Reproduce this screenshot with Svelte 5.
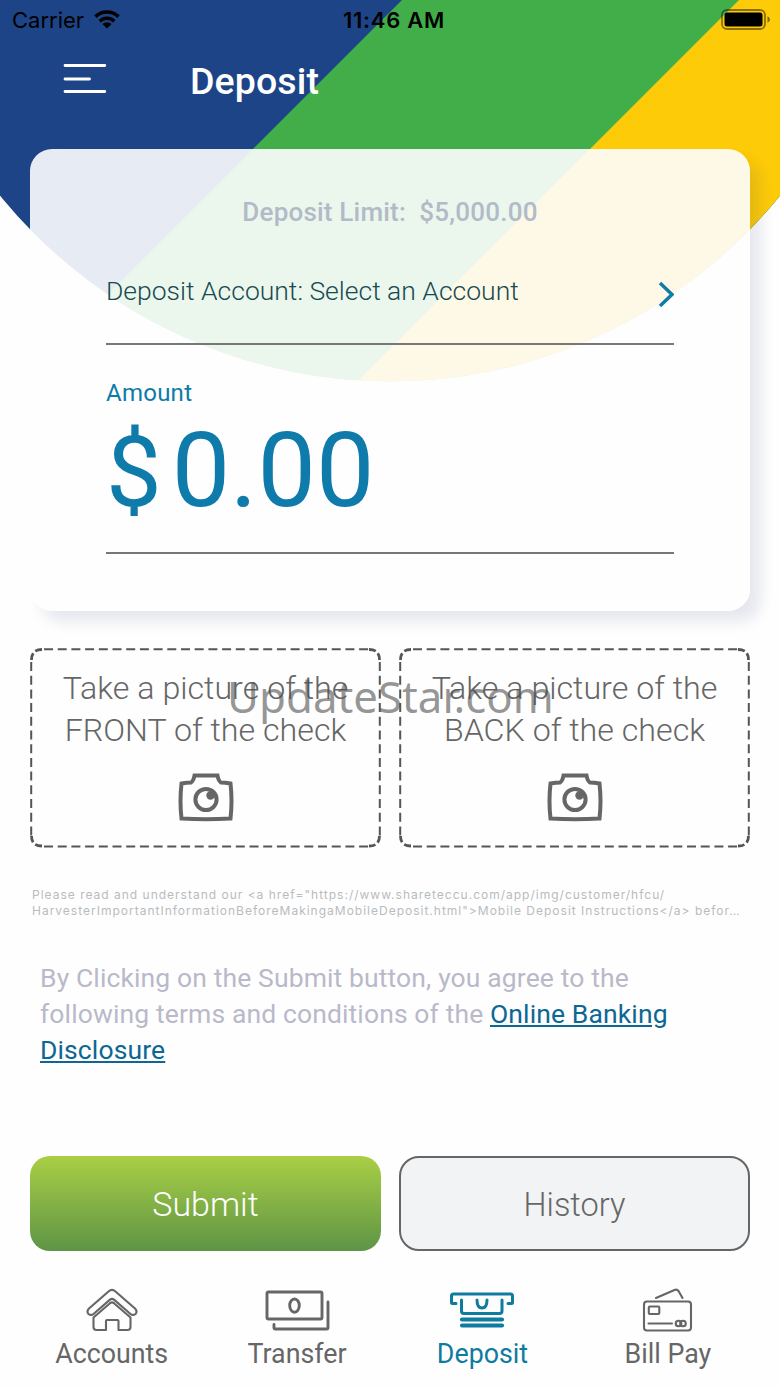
<script lang="ts">
    let limit = 5000
    let amount = 0
    let active = 'Deposit'
    // the two sides of the check
    const sides = ['FRONT', 'BACK']
    const tabs = ['Accounts', 'Transfer', 'Deposit', 'Bill Pay']
    const notice = [
        'Please read and understand our <a href="https://www.shareteccu.com/app/img/customer/hfcu/',
        'HarvesterImportantInformationBeforeMakingaMobileDeposit.html">Mobile Deposit Instructions</a> befor…'
    ]
    function money(n: number) {
        return n.toFixed(2).replace(/\B(?=(\d{3})+\.)/g, ',')
    }
</script>

<div class="screen">
    <svg class="backdrop" width="780" height="382" viewBox="0 0 780 382">
        <clipPath id="dome"><circle cx="390" cy="-121" r="502.3" /></clipPath>
        <g clip-path="url(#dome)">
            <rect width="780" height="382" fill="#1c4487" />
            <path d="M402 0H780V382H20Z" fill="#41ae49" />
            <path d="M739 0H780V382H357Z" fill="#fecb08" />
        </g>
    </svg>

    <div class="status">
        <div class="carrier">
            <span>Carrier</span>
            <svg width="26" height="19" viewBox="0 0 26 19">
                <path d="M1.5 6.6A16.5 16.5 0 0 1 24.5 6.6" fill="none" stroke="#000" stroke-width="3.6" />
                <path d="M5.7 11.2A10.5 10.5 0 0 1 20.3 11.2" fill="none" stroke="#000" stroke-width="3.4" />
                <path d="M8.5 14.1A6.3 6.3 0 0 1 17.5 14.1L13 18.5Z" />
            </svg>
        </div>
        <span class="time">11:46 AM</span>
        <svg class="battery" width="50" height="22" viewBox="0 0 50 22">
            <rect x="1" y="1" width="43" height="19" rx="5" fill="none" stroke="#000" stroke-opacity=".45" stroke-width="1.8" />
            <rect x="3.5" y="3.5" width="38" height="14" rx="2.5" />
            <path d="M46.5 7.2Q49 8.5 49 10.5T46.5 13.8Z" fill-opacity=".5" />
        </svg>
    </div>

    <header>
        <svg width="44" height="32" viewBox="0 0 44 32" stroke="#fff" stroke-width="2.8" stroke-linecap="round">
            <path d="M2 2.5H41.8M2 16H26.5M2 28.5H41.8" />
        </svg>
        <h1>Deposit</h1>
    </header>

    <section class="card">
        <p class="limit">Deposit Limit:&nbsp; ${money(limit)}</p>
        <div class="account">
            <span>Deposit Account: Select an Account</span>
            <svg width="16" height="26" viewBox="0 0 16 26">
                <path d="M2 2L14 13.5L2 25" fill="none" stroke="#0e7ba8" stroke-width="3.4" />
            </svg>
        </div>
        <div class="label">Amount</div>
        <div class="amount"><span>$</span>{money(amount)}</div>
    </section>

    <div class="photos">
        {#each sides as side}
            <div class="photo">
                <svg class="frame" width="351" height="200" viewBox="0 0 351 200">
                    <path d="M14 1.2H339M14 198.4H339M1.2 14V188M349.8 14V188" />
                    <path class="corner" d="M1.5 12Q1.5 1.5 12 1.5M339 1.5Q349.5 1.5 349.5 12M349.5 188Q349.5 198 339 198M12 198Q1.5 198 1.5 188" />
                </svg>
                <p>Take a picture of the<br />{side} of the check</p>
                <svg class="camera" width="56" height="50" viewBox="0 0 56 50">
                    <path d="M3.5 11.5Q9 10.5 13 10.5Q15.5 9 16.5 3.5H39.5Q40.5 9 43 10.5Q47 10.5 52.5 11.5Q54.5 29 52.5 46.5Q28 47.8 3.5 46.5Q1.5 29 3.5 11.5Z" />
                    <circle cx="28" cy="27.5" r="10.6" />
                    <circle class="glint" cx="32.5" cy="23.5" r="4.2" />
                </svg>
            </div>
        {/each}
    </div>

    <div class="notice">
        {#each notice as line}
            <div>{line}</div>
        {/each}
    </div>

    <p class="terms">
        By Clicking on the Submit button, you agree to the<br />
        following terms and conditions of the <span class="link">Online Banking</span><br />
        <span class="link">Disclosure</span>
    </p>

    <div class="buttons">
        <button class="submit">Submit</button>
        <button class="history">History</button>
    </div>

    <nav>
        {#each tabs as tab}
            <div class="tab" class:active={tab == active}>
                <svg width="70" height="46" viewBox="0 0 70 46">
                    {#if tab == 'Accounts'}
                        <g stroke-width="2.1">
                            <path d="M31.8 5.2Q35 2.5 38.2 5.2L58 22.5Q60.8 25.5 58.5 28Q56 30 53.2 27.8L37 13.6Q35 12 33 13.6L16.8 27.8Q14 30 11.500 28Q9.2 25.5 12 22.5Z" />
                            <path d="M16.5 31.500L33 17.200Q35 15.700 37 17.200L53.500 31.500V41Q53.5 44 50.5 44H41.5V35Q41.5 34 40.5 34H30Q29 34 29 35V44H19.5Q16.5 44 16.5 41Z" />
                        </g>
                    {:else if tab == 'Transfer'}
                        <g stroke-width="2.9">
                            <rect x="5" y="6" width="55" height="27" rx="1.5" />
                            <ellipse cx="32.5" cy="19.6" rx="4.8" ry="6.6" />
                            <path d="M66 16V42Q66 43 65 43H13Q12 43 12 42V38.5" />
                        </g>
                    {:else if tab == 'Deposit'}
                        <g stroke-width="3">
                            <path d="M9 17.500H5.5Q4.500 17.500 4.500 16.500V10Q4.5 8 6.5 8H63.5Q65.5 8 65.5 10V16.500Q65.5 17.500 64.5 17.500H61" />
                            <path d="M14.5 14V25Q14.5 27.500 17 27.500H52.5Q55 27.500 55 25V14" />
                            <path d="M30 14Q30 22 35 22T40 14" />
                            <path d="M15 33.500H55M15 39.500H55" stroke-width="4.2" />
                        </g>
                    {:else}
                        <g stroke-width="2.1">
                            <rect x="11" y="15.500" width="47" height="29" rx="3" />
                            <path d="M23 12L41.5 4Q44 3 45.5 5L49.5 12" />
                            <rect x="15.8" y="20.5" width="10.5" height="7.5" rx="1" />
                            <path d="M15.5 37.5H39" />
                            <circle cx="45.5" cy="37.5" r="2.8" /><circle cx="50" cy="37.5" r="2.8" />
                        </g>
                    {/if}
                </svg>
                <span>{tab}</span>
            </div>
        {/each}
    </nav>

    <div class="watermark">UpdateStar.com</div>
</div>

<style>
    :global(body) {
        background: #fefefe;
    }
    .screen {
        position: relative;
        width: 780px;
        height: 1387px;
        overflow: hidden;
        font-family: Roboto, sans-serif;
    }
    h1, p {
        margin: 0;
    }
    .backdrop {
        position: absolute;
        top: 0;
        left: 0;
        z-index: -1;
    }
    .status {
        height: 40px;
        display: grid;
        grid-template-columns: 1fr auto 1fr;
        align-items: center;
        padding: 0 9px 0 12px;
        font: 22px/40px Inter, sans-serif;
    }
    .carrier {
        display: flex;
        align-items: center;
        gap: 10px;
    }
    .carrier svg {
        margin-top: -2px;
    }
    .time {
        padding-left: 5px;
        font-weight: 600;
        letter-spacing: 0.7px;
    }
    .battery {
        justify-self: end;
    }
    header {
        height: 109px;
        box-sizing: border-box;
        padding: 18px 0 0 63px;
        display: flex;
        gap: 83px;
    }
    header svg {
        margin-top: 5px;
    }
    h1 {
        color: #fff;
        font-size: 37.5px;
        font-weight: 500;
        line-height: 46px;
        letter-spacing: 0.1px;
    }
    .card {
        height: 462px;
        box-sizing: border-box;
        margin: 0 30px;
        padding: 45px 76px 0;
        border-radius: 22px;
        background: rgba(254, 254, 255, 0.9);
        box-shadow: 11px 11px 14px rgba(20, 35, 100, 0.1);
    }
    .limit {
        text-align: center;
        color: #b2bac8;
        font-size: 26px;
        font-weight: 500;
        line-height: 36px;
        letter-spacing: 0.2px;
    }
    .account {
        display: flex;
        justify-content: space-between;
        align-items: center;
        margin-top: 31px;
        padding-bottom: 22px;
        border-bottom: 2px solid #777;
        color: #174a50;
        font-size: 26.5px;
        font-weight: 300;
        line-height: 60px;
    }
    .account svg {
        margin-top: 6px;
    }
    .label {
        margin-top: 33px;
        color: #0e7ba8;
        font-size: 24px;
        line-height: 30px;
        letter-spacing: 0.25px;
    }
    .amount {
        box-sizing: border-box;
        height: 146px;
        padding-top: 8px;
        border-bottom: 2px solid #777;
        color: #0e7bab;
        font-size: 104px;
        line-height: 110px;
    }
    .amount span {
        margin-right: 10px;
        font-size: 99px;
    }
    .photos {
        display: flex;
        gap: 18px;
        margin: 37px 30px 0;
    }
    .photo {
        position: relative;
        width: 351px;
        height: 200px;
        box-sizing: border-box;
        padding-top: 19px;
        display: flex;
        flex-direction: column;
        align-items: center;
    }
    .frame {
        position: absolute;
        top: 0;
        left: 0;
        fill: none;
        stroke: #555;
        stroke-width: 2;
        stroke-dasharray: 9 4.7;
    }
    .corner {
        stroke-width: 2.8;
        stroke-dasharray: 7 3;
    }
    .photo p {
        text-align: center;
        color: #666;
        font-size: 32.2px;
        font-weight: 300;
        line-height: 42px;
    }
    .camera {
        margin-top: 21px;
        fill: none;
        stroke: #666;
        stroke-width: 4;
    }
    .camera .glint {
        fill: #666;
        stroke: none;
    }
    .notice {
        margin: 39px 32px 0;
        color: #b8bcc0;
        font: 400 12px/16px Inter, sans-serif;
        letter-spacing: 1px;
        white-space: nowrap;
    }
    .terms {
        margin: 41px 40px 0;
        color: #b9b9ca;
        font-size: 26.5px;
        line-height: 36px;
        letter-spacing: 0.12px;
        white-space: nowrap;
    }
    .link {
        color: #0b6794;
        text-decoration: underline;
    }
    .buttons {
        display: flex;
        gap: 18px;
        margin: 88px 30px 0;
    }
    button {
        width: 351px;
        height: 95px;
        padding: 0;
        border: none;
        border-radius: 20px;
        font: 300 34px Roboto, sans-serif;
    }
    .submit {
        color: #fff;
        background: linear-gradient(#a9cf45, #5e9446);
    }
    .history {
        padding-top: 2px;
        color: #666;
        background: #f2f3f5;
        border: 2px solid #666;
        font-size: 32.5px;
    }
    nav {
        display: flex;
        margin: 35px 19px 0;
    }
    .tab {
        width: 185.4px;
        display: flex;
        flex-direction: column;
        align-items: center;
        color: #666;
        font-size: 26.8px;
        line-height: 36px;
    }
    .tab.active {
        color: #0e7b9f;
    }
    .tab svg {
        margin-bottom: 4px;
        fill: none;
        stroke: currentColor;
        stroke-linecap: round;
        stroke-linejoin: round;
    }
    .watermark {
        position: absolute;
        top: 666px;
        left: 227px;
        color: rgba(80, 80, 80, 0.6);
        font: 400 43.8px/60px "Noto Sans", sans-serif;
    }
</style>
